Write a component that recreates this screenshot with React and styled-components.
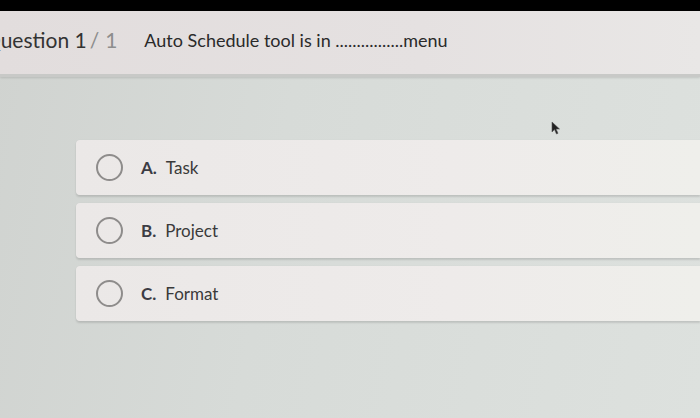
import React from 'react'
import styled, { createGlobalStyle } from 'styled-components'

const GlobalStyle = createGlobalStyle`
    html, body {
        margin: 0;
        padding: 0;
        background: #d6dad7;
        font-family: Lato, "Open Sans", sans-serif;
    }
`

const Page = styled.div`
    position: relative;
    width: 700px;
    height: 418px;
    overflow: hidden;
    background: linear-gradient(100deg, #d0d3d0 0%, #d7dbd8 40%, #dde1de 100%);
`

const TopBar = styled.div`
    height: 11px;
    background: #000;
`

const Header = styled.header`
    height: 66px;
    display: flex;
    align-items: center;
    padding-bottom: 6px;
    box-sizing: border-box;
    background: linear-gradient(90deg, #e2dddd 0%, #e5e1e1 60%, #e9e7e6 100%);
    border-bottom: 3px solid #c8c9c7;
    box-shadow: 0 1px 2px rgba(0, 0, 0, 0.12);
`

const Title = styled.h1`
    margin: 0 0 0 -16px;
    font-size: 21px;
    font-weight: 400;
    color: #333;
    white-space: nowrap;
    & span {
        color: #8d8d8d;
        margin: 0 3px;
    }
`

const QuestionText = styled.p`
    margin: 0 0 0 24px;
    font-size: 18px;
    color: #2a2a2a;
    white-space: nowrap;
`

const OptionList = styled.div`
    display: flex;
    flex-direction: column;
    gap: 8px;
    padding: 63px 0 0 76px;
`

const OptionCard = styled.div`
    height: 55px;
    display: flex;
    align-items: center;
    padding-left: 20px;
    background: linear-gradient(90deg, #ebe8e7 0%, #eeebea 60%, #efefeb 100%);
    border-radius: 4px 0 0 4px;
    box-shadow: 0 2px 2px rgba(0, 0, 0, 0.12), 0 0 1px rgba(0, 0, 0, 0.1);
    font-size: 17px;
    color: #3a3a3a;
`

const Radio = styled.span`
    width: 23px;
    height: 23px;
    border: 2px solid #8e8c8b;
    border-radius: 50%;
    flex-shrink: 0;
`

const Letter = styled.b`
    margin-left: 18px;
    font-weight: 700;
    color: #3c3c44;
`

const Label = styled.span`
    margin-left: 9px;
`

const Cursor = styled.svg`
    position: absolute;
    left: 551px;
    top: 121px;
    width: 10px;
    height: 14px;
`

const options = [
    { letter: 'A.', text: 'Task' },
    { letter: 'B.', text: 'Project' },
    { letter: 'C.', text: 'Format' },
]

function App() {
    return (
        <Page>
            <GlobalStyle />
            <TopBar />
            <Header>
                <Title>Question 1<span>/</span><span>1</span></Title>
                <QuestionText>Auto Schedule tool is in ................menu</QuestionText>
            </Header>
            <OptionList>
                {options.map(o => (
                    <OptionCard key={o.letter}>
                        <Radio />
                        <Letter>{o.letter}</Letter>
                        <Label>{o.text}</Label>
                    </OptionCard>
                ))}
            </OptionList>
            <Cursor viewBox="0 0 10 14">
                <path d="M1 1 L1 11 L3.5 8.5 L5.5 13 L7 12.3 L5 8 L8.5 8 Z" fill="#222" stroke="#555" strokeWidth="0.6" />
            </Cursor>
        </Page>
    )
}

export default App
